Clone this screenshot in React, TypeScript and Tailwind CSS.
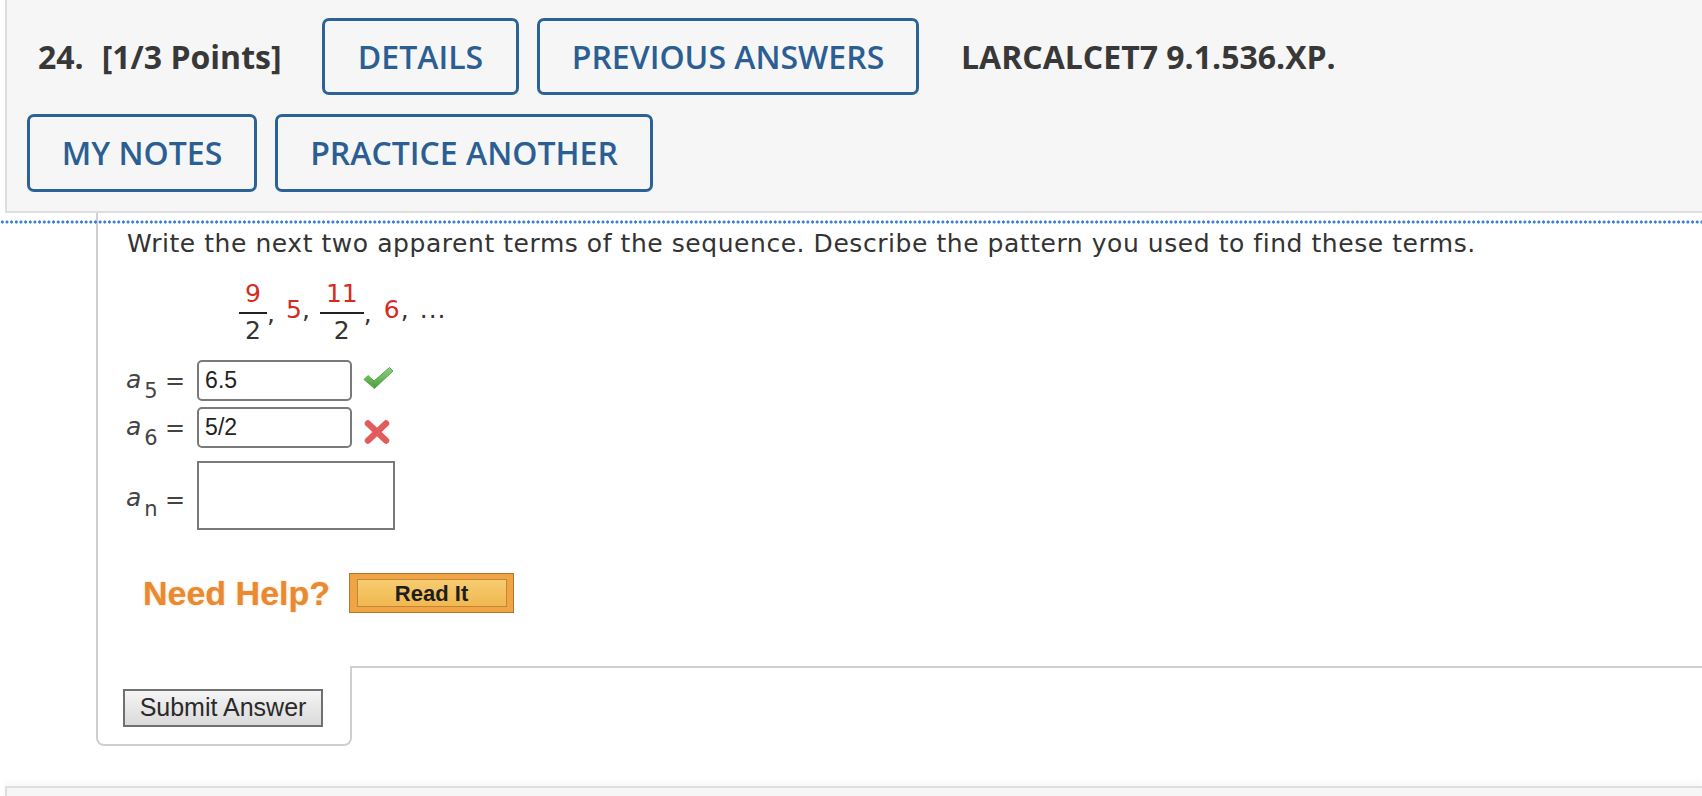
import React from "react";

const blueBtn =
  "flex items-center justify-center border-[3px] border-[#2d6296] rounded-[7px] text-[#2b5f94] text-[32px] font-semibold leading-none";

function Check() {
  return (
    <svg width="31" height="24" viewBox="0 0 31 24">
      <defs>
        <linearGradient id="cg" x1="0" y1="0" x2="0" y2="1">
          <stop offset="0" stopColor="#8fd07f" />
          <stop offset="1" stopColor="#4a9e3c" />
        </linearGradient>
      </defs>
      <path
        d="M1 13.5 L5 9.5 L11 15 L26.5 1.5 L30 5 L11.5 22.5 Z"
        fill="url(#cg)"
        stroke="#5aa84a"
        strokeWidth="1"
        strokeLinejoin="round"
      />
    </svg>
  );
}

function Cross() {
  return (
    <svg width="28" height="26" viewBox="0 0 28 26">
      <g stroke="#e45b5b" strokeWidth="6.5" strokeLinecap="round">
        <line x1="5" y1="4.5" x2="23" y2="21.5" />
        <line x1="23" y1="4.5" x2="5" y2="21.5" />
      </g>
    </svg>
  );
}

function Frac({ num, den }: { num: string; den: string }) {
  return (
    <span className="flex flex-col items-center">
      <span className="px-[6px] leading-[24px] text-[#d42b1f]">{num}</span>
      <span className="mt-[6px] h-[2px] w-full bg-[#222]" />
      <span className="mt-[5px] leading-[24px] text-[#333]">{den}</span>
    </span>
  );
}

function Label({ sub, low }: { sub: string; low?: boolean }) {
  return (
    <div
      className={`flex w-[38px] items-baseline text-[#444] leading-[24px] ${low ? "relative top-[3px]" : ""}`}
    >
      <span className="text-[25px] italic">a</span>
      <span className="relative top-[10px] ml-[3px] text-[21px]">{sub}</span>
    </div>
  );
}

export default function App() {
  return (
    <div className="w-[1702px] h-[796px] overflow-hidden bg-white text-[#333]">
      {/* Header */}
      <div
        className="ml-[5px] h-[213px] border-l-2 border-b-2 border-[#dedede] bg-[#f6f6f6] pt-[18px] pl-[20px]"
        style={{ fontFamily: '"Open Sans", sans-serif' }}
      >
        <div className="flex h-[77px] items-center">
          <div className="ml-[11px] w-[284px] text-[32px] font-bold text-[#383838] leading-none">
            <span>24.</span>
            <span className="ml-[18px]">[1/3 Points]</span>
          </div>
          <div className={`${blueBtn} h-[77px] w-[197px]`}>DETAILS</div>
          <div className={`${blueBtn} ml-[18px] h-[77px] w-[382px]`}>PREVIOUS ANSWERS</div>
          <div className="ml-[42px] text-[32px] font-bold text-[#383838] leading-none">
            LARCALCET7 9.1.536.XP.
          </div>
        </div>
        <div className="mt-[19px] flex gap-[18px]">
          <div className={`${blueBtn} h-[78px] w-[230px]`}>MY NOTES</div>
          <div className={`${blueBtn} h-[78px] w-[378px]`}>PRACTICE ANOTHER</div>
        </div>
      </div>

      {/* Content */}
      <div className="relative">
        <div className="absolute left-0 right-0 top-[7px] h-[4px] bg-[radial-gradient(circle,#3a7fdc_1.4px,transparent_1.8px)] bg-[length:4.67px_4px] bg-repeat-x" />
        <div className="ml-[96px]">
          <div
            className="h-[453px] border-l-2 border-[#cfcfcf] pt-[15px]"
            style={{ fontFamily: '"DejaVu Sans", Verdana, sans-serif' }}
          >
            <p className="pl-[29px] text-[25px] leading-[32px] tracking-[0.55px] text-[#333]">
              Write the next two apparent terms of the sequence. Describe the pattern you used to find
              these terms.
            </p>

            <div className="mt-[22px] flex items-center pl-[141px] text-[25px]">
              <Frac num="9" den="2" />
              <span className="w-[19px] pt-[2px] leading-[24px] text-[#333]">,</span>
              <span className="w-[13px] pb-[5px] leading-[24px] text-[#d42b1f]">5</span>
              <span className="w-[21px] pb-[5px] pl-[3px] leading-[24px] text-[#333]">,</span>
              <Frac num="11" den="2" />
              <span className="w-[20px] pt-[2px] leading-[24px] text-[#333]">,</span>
              <span className="w-[14px] pb-[5px] leading-[24px] text-[#d42b1f]">6</span>
              <span className="w-[22px] pb-[5px] pl-[3px] leading-[24px] text-[#333]">,</span>
              <span className="pb-[5px] leading-[24px] tracking-[1px] text-[#333]">...</span>
            </div>

            <div className="mt-[17px] flex flex-col gap-[6px] pl-[28px]">
              <div className="flex h-[41px] items-center">
                <Label sub="5" />
                <span className="ml-[1px] text-[24px] text-[#444]">=</span>
                <div
                  className="ml-[12px] flex h-[41px] w-[155px] items-center rounded-[5px] border-2 border-[#7a7a7a] bg-white pl-[6px] text-[23px] text-[#222]"
                  style={{ fontFamily: '"Liberation Sans", Arial, sans-serif' }}
                >
                  6.5
                </div>
                <span className="ml-[11px] mt-[-6px]">
                  <Check />
                </span>
              </div>
              <div className="flex h-[41px] items-center">
                <Label sub="6" />
                <span className="ml-[1px] text-[24px] text-[#444]">=</span>
                <div
                  className="ml-[12px] flex h-[41px] w-[155px] items-center rounded-[5px] border-2 border-[#7a7a7a] bg-white pl-[6px] text-[23px] text-[#222]"
                  style={{ fontFamily: '"Liberation Sans", Arial, sans-serif' }}
                >
                  5/2
                </div>
                <span className="ml-[11px] mt-[8px]">
                  <Cross />
                </span>
              </div>
            </div>

            <div className="mt-[13px] flex h-[69px] items-center pl-[28px]">
              <Label sub="n" low />
              <span className="relative top-[4px] ml-[1px] text-[24px] text-[#444]">=</span>
              <div className="ml-[12px] h-[69px] w-[198px] border-2 border-[#7a7a7a] bg-white" />
            </div>

            <div
              className="mt-[43px] flex h-[40px] items-center pl-[45px]"
              style={{ fontFamily: '"Liberation Sans", Arial, sans-serif' }}
            >
              <span
                className="text-[34px] font-bold text-[#e98a30]"
                style={{ textShadow: "0 0 2px rgba(240,160,80,0.6)" }}
              >
                Need Help?
              </span>
              <div className="ml-[19px] flex h-[40px] w-[165px] items-center justify-center border border-[#b4722f] bg-[#f0a545]">
                <div className="flex h-[28px] w-[150px] items-center justify-center border border-[#c4843a] bg-gradient-to-b from-[#f6cc70] to-[#f0b850] text-[22px] font-bold text-[#1e1e1e]">
                  Read It
                </div>
              </div>
            </div>
          </div>

          <div className="flex">
            <div className="h-[80px] w-[256px] rounded-b-[8px] border-x-2 border-b-2 border-[#cfcfcf] pt-[23px] pl-[25px]">
              <div
                className="flex h-[38px] w-[200px] items-center justify-center border-2 border-[#707070] bg-gradient-to-b from-[#f5f5f5] to-[#dadada] text-[25px] text-[#2a2a2a]"
                style={{ fontFamily: '"Liberation Sans", Arial, sans-serif' }}
              >
                Submit Answer
              </div>
            </div>
            <div className="flex-1 border-t-2 border-[#cfcfcf]" />
          </div>
        </div>

        <div className="ml-[5px] mt-[40px] h-[20px] border-l-2 border-t-2 border-[#dedede] bg-[#f6f6f6] shadow-[0_-4px_6px_rgba(0,0,0,0.03)]" />
      </div>
    </div>
  );
}
